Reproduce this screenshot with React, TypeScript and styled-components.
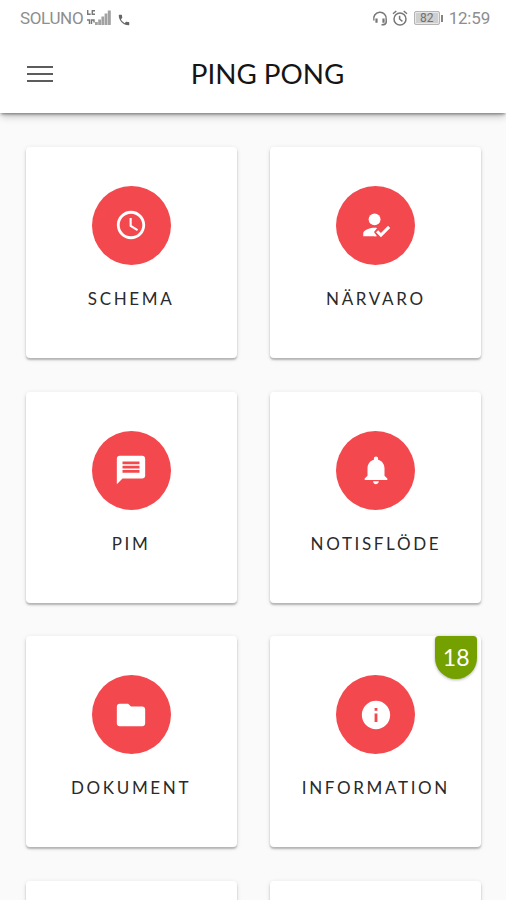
import React from "react";
import styled, { createGlobalStyle } from "styled-components";
import {
  MdSchedule,
  MdMessage,
  MdNotifications,
  MdFolder,
  MdInfo,
  MdPhone,
} from "react-icons/md";

const GlobalStyle = createGlobalStyle`
  * { box-sizing: border-box; }
  body {
    margin: 0;
    background: #fafafa;
    font-family: Lato, "Liberation Sans", sans-serif;
    overflow: hidden;
  }
`;

const Screen = styled.div`
  display: flex;
  flex-direction: column;
  width: 506px;
  height: 900px;
  overflow: hidden;
  background: #fafafa;
`;

const Header = styled.header`
  flex: none;
  height: 112.5px;
  background: #fff;
  z-index: 1;
  box-shadow: 0 2px 3px -1px rgba(0, 0, 0, 0.45), 0 4px 8px -1px rgba(0, 0, 0, 0.24);
`;

const StatusBar = styled.div`
  display: flex;
  align-items: center;
  justify-content: space-between;
  height: 36px;
  padding: 0 16px 0 20px;
  font-family: Roboto, "Liberation Sans", sans-serif;
`;

const StatusGroup = styled.div`
  display: flex;
  align-items: center;
  height: 100%;
`;

const StatusText = styled.span<{ $spacing: number }>`
  font-size: 17px;
  line-height: 20px;
  font-weight: 400;
  color: #8e8e8e;
  letter-spacing: ${(p) => p.$spacing}px;
`;

const Signal = styled.svg`
  width: 27px;
  height: 18px;
  margin: 0 4px 0 3px;
`;

const CallIcon = styled(MdPhone)`
  width: 14px;
  height: 14px;
  margin-top: 4px;
  color: #666;
`;

const StatusIcon = styled.svg<{ $gap: number }>`
  width: 16px;
  height: 16px;
  margin-right: ${(p) => p.$gap}px;
`;

const Battery = styled.div`
  display: flex;
  align-items: center;
  margin-right: 6px;
`;

const BatteryBody = styled.div`
  display: flex;
  align-items: center;
  justify-content: center;
  width: 26px;
  height: 14px;
  border: 1px solid #b4b4b4;
  border-radius: 2px;
  background: #cfcfcf;
  box-shadow: inset 0 0 0 1px #e8e8e8;
  color: #707070;
  font-size: 12px;
  line-height: 12px;
  font-weight: 400;
`;

const BatteryTip = styled.div`
  width: 2px;
  height: 7px;
  margin-left: 1px;
  background: #858585;
`;

const TitleBar = styled.div`
  display: grid;
  grid-template-columns: 80px 1fr 80px;
  align-items: center;
  height: 76px;
`;

const MenuButton = styled.button`
  display: flex;
  flex-direction: column;
  gap: 5px;
  width: 26px;
  margin: 0 0 0 27px;
  padding: 0;
  border: 0;
  background: none;
`;

const MenuLine = styled.span`
  height: 2px;
  background: #5c5c5c;
`;

const Title = styled.h1`
  margin: 0;
  padding-left: 29px;
  text-align: center;
  white-space: nowrap;
  color: #151515;
  font-size: 27.8px;
  line-height: 34px;
  font-weight: 400;
`;

const Grid = styled.main`
  display: grid;
  grid-template-columns: repeat(2, 211px);
  grid-auto-rows: 211px;
  gap: 33.65px 33.8px;
  padding: 34.4px 0 0 25.6px;
`;

const Card = styled.section`
  position: relative;
  display: flex;
  flex-direction: column;
  align-items: center;
  padding-top: 39px;
  border-radius: 4px;
  background: #fff;
  box-shadow: 0 2px 2px rgba(0, 0, 0, 0.24), 0 1px 5px rgba(0, 0, 0, 0.1);
`;

const IconDisc = styled.div`
  display: flex;
  align-items: center;
  justify-content: center;
  width: 79px;
  height: 79px;
  border-radius: 50%;
  background: #f2484e;
  color: #fff;

  svg {
    width: 34px;
    height: 34px;
  }
`;

const Label = styled.span`
  margin-top: 23px;
  white-space: nowrap;
  color: #2a2a2a;
  font-size: 17px;
  line-height: 22px;
  letter-spacing: 2.65px;
`;

const Badge = styled.span`
  position: absolute;
  top: -0.5px;
  right: 4px;
  width: 42.5px;
  height: 43px;
  border-radius: 4px 4px 22px 22px;
  background: #74a000;
  box-shadow: 0 1px 3px rgba(0, 0, 0, 0.3);
  color: #fff;
  font-size: 23px;
  line-height: 43px;
  text-align: center;
`;

const AttendanceIcon = () => (
  <svg viewBox="0 0 24 24" fill="currentColor">
    <path d="M9 17l3-2.94c-.39-.04-.68-.06-1-.06-2.67 0-8 1.34-8 4v2h9l-3-3z" />
    <path d="M8.5 16.8L11.6 14l1.2.2L10.6 17l2.1 3H11z" />
    <circle cx="11" cy="8" r="4.2" />
    <path d="M15.47 20.7L12 17.2l1.5-1.5 1.97 1.97 5.03-5.07 1.5 1.5z" />
  </svg>
);

const tiles = [
  { label: "SCHEMA", icon: <MdSchedule /> },
  { label: "NÄRVARO", icon: <AttendanceIcon /> },
  { label: "PIM", icon: <MdMessage /> },
  { label: "NOTISFLÖDE", icon: <MdNotifications /> },
  { label: "DOKUMENT", icon: <MdFolder /> },
  { label: "INFORMATION", icon: <MdInfo />, badge: 18 },
];

export default function App() {
  return (
    <Screen>
      <GlobalStyle />
      <Header>
        <StatusBar>
          <StatusGroup>
            <StatusText $spacing={-0.35}>SOLUNO</StatusText>
            <Signal viewBox="0 0 27 18" fill="none">
              <g stroke="#777" strokeWidth="1.4">
                <path d="M1.7 1v4.3h3M9 1.8H6.3v3.5H9" />
                <path d="M1 11h2.5v4M5.5 15v-4H8v2.5" />
              </g>
              <g fill="#a2a2a2">
                <rect x="9" y="13" width="2.8" height="3" />
                <rect x="12.2" y="10.5" width="2.8" height="5.5" />
                <rect x="15.4" y="7.5" width="2.8" height="8.5" />
                <rect x="18.6" y="4.5" width="2.8" height="11.5" />
                <rect x="21.8" y="1.5" width="3" height="14.5" />
              </g>
            </Signal>
            <CallIcon />
          </StatusGroup>
          <StatusGroup>
            <StatusIcon $gap={4} viewBox="0 0 16 16" fill="none" stroke="#777" strokeWidth="1.5">
              <path d="M2 10.5A6.3 6.3 0 1 1 14.2 9.5V12.5Q13.5 15 9.5 14.8" />
              <path d="M4.5 8.5v4.2M11.5 8.5v4.2" strokeWidth="2.2" />
            </StatusIcon>
            <StatusIcon $gap={6} viewBox="0 0 16 16" fill="none" stroke="#777" strokeWidth="1.5">
              <circle cx="8" cy="9" r="6" />
              <path d="M1 3.8L4.3 1M15 3.8L11.7 1M7.6 5.7V9l2.8 2.4" />
            </StatusIcon>
            <Battery>
              <BatteryBody>82</BatteryBody>
              <BatteryTip />
            </Battery>
            <StatusText $spacing={-0.2}>12:59</StatusText>
          </StatusGroup>
        </StatusBar>
        <TitleBar>
          <MenuButton aria-label="Meny">
            <MenuLine />
            <MenuLine />
            <MenuLine />
          </MenuButton>
          <Title>PING PONG</Title>
        </TitleBar>
      </Header>
      <Grid>
        {tiles.map((t) => (
          <Card key={t.label}>
            <IconDisc>{t.icon}</IconDisc>
            <Label>{t.label}</Label>
            {t.badge && <Badge>{t.badge}</Badge>}
          </Card>
        ))}
        <Card />
        <Card />
      </Grid>
    </Screen>
  );
}
